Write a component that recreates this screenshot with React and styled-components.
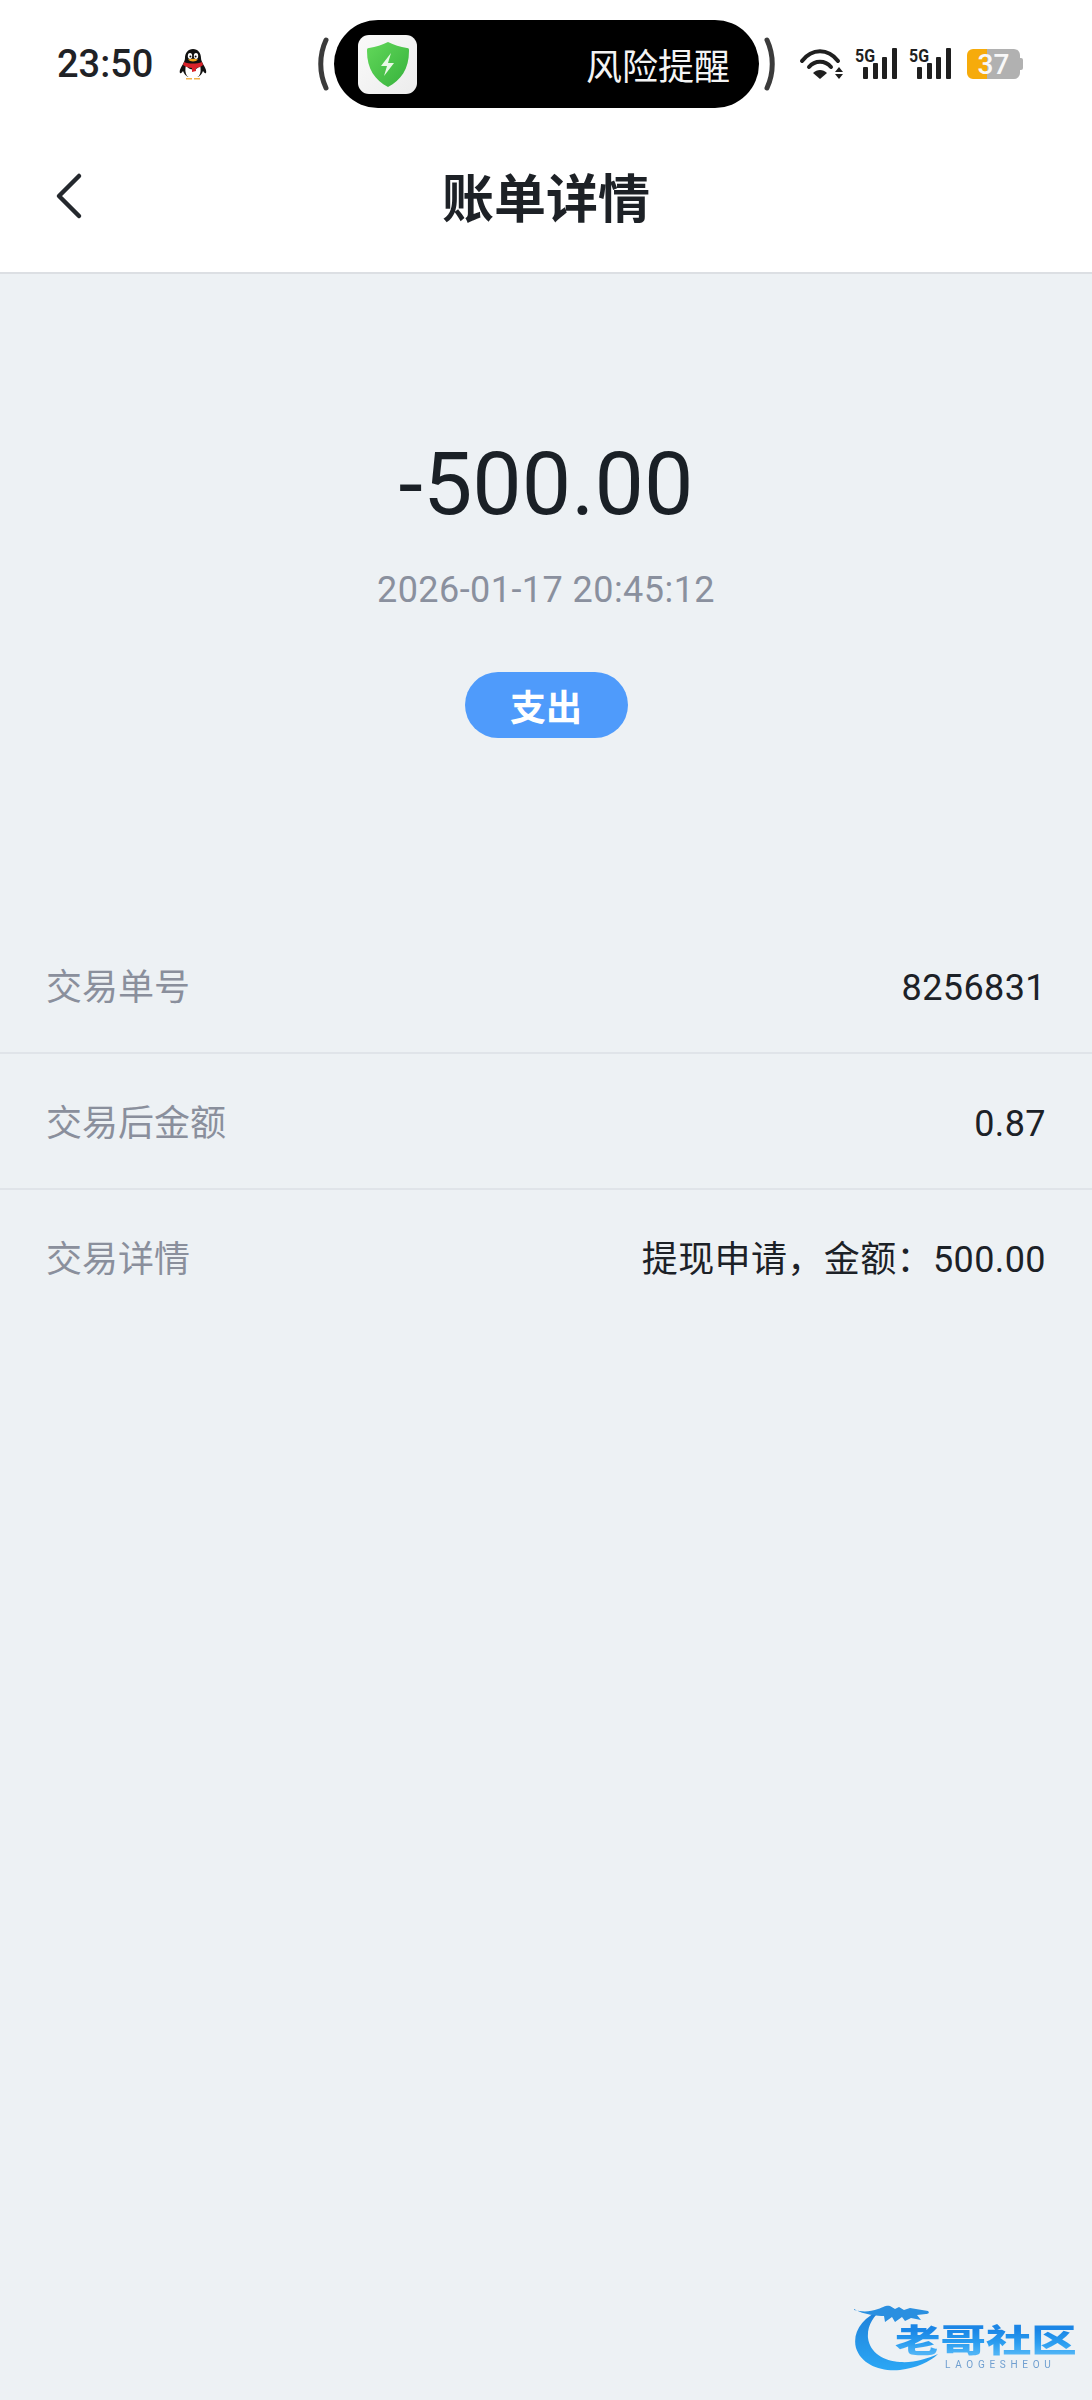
import React from 'react';
import styled, { createGlobalStyle } from 'styled-components';

const GlobalStyle = createGlobalStyle`
    html, body {
        margin: 0;
        padding: 0;
        background: #edf1f4;
        font-family: Roboto, "Noto Sans CJK SC", sans-serif;
    }
    * {
        box-sizing: border-box;
    }
`;

const Page = styled.div`
    position: relative;
    width: 1092px;
    height: 2400px;
    overflow: hidden;
    background: #edf1f4;
`;

const Header = styled.div`
    background: white;
    border-bottom: 2px solid #dcdfe3;
`;

const StatusBar = styled.div`
    display: flex;
    align-items: center;
    height: 124px;
    padding: 20px 0 16px 57px;
`;

const Time = styled.div`
    width: 97px;
    font-size: 38px;
    font-weight: 500;
    color: #1f2226;
`;

const QQ = styled.svg`
    width: 28px;
    height: 32px;
    margin-left: 25px;
`;

const Bracket = styled.svg`
    width: 12px;
    height: 54px;
    margin: ${(p) => p.$margin};
`;

const Island = styled.div`
    display: flex;
    align-items: center;
    justify-content: space-between;
    width: 425px;
    height: 88px;
    padding: 0 29px 0 24px;
    background: black;
    border-radius: 44px;
`;

const IslandIcon = styled.div`
    display: flex;
    align-items: center;
    justify-content: center;
    width: 59px;
    height: 59px;
    background: linear-gradient(135deg, #fafafa, #ececec);
    border-radius: 11px;
`;

const IslandText = styled.div`
    font-size: 36px;
    color: #f4f4f4;
`;

const StatusIcons = styled.div`
    display: flex;
    align-items: center;
    margin-left: 22px;
`;

const Wifi = styled.svg`
    width: 46px;
    height: 34px;
`;

const Signal = styled.svg`
    width: 44px;
    height: 42px;
    margin-left: ${(p) => p.$gap}px;
`;

const Battery = styled.div`
    position: relative;
    display: flex;
    align-items: center;
    justify-content: center;
    width: 53px;
    height: 30px;
    margin-left: 14px;
    font-size: 28px;
    font-weight: 500;
    color: #f8f8f8;
    background: linear-gradient(90deg, #f6ab0b 38%, #b1b1b1 38%);
    border-radius: 6px;

    &::after {
        content: "";
        position: absolute;
        right: -3px;
        top: 9px;
        width: 3px;
        height: 12px;
        background: #b1b1b1;
        border-radius: 0 2px 2px 0;
    }
`;

const NavBar = styled.div`
    display: grid;
    grid-template-columns: 1fr auto 1fr;
    align-items: center;
    height: 148px;
    padding-bottom: 4px;
`;

const Back = styled.svg`
    width: 32px;
    height: 48px;
    margin-left: 54px;
`;

const Title = styled.div`
    margin-top: 9px;
    font-size: 52px;
    line-height: 70px;
    font-weight: 700;
    color: #1d2126;
`;

const Hero = styled.div`
    display: flex;
    flex-direction: column;
    align-items: center;
    padding-top: 160px;
`;

const Amount = styled.div`
    font-size: 88px;
    line-height: 100px;
    color: #1a2026;
`;

const DateText = styled.div`
    margin-top: 34px;
    font-size: 36px;
    line-height: 44px;
    letter-spacing: 0.45px;
    color: #8a909e;
`;

const Badge = styled.div`
    display: flex;
    align-items: center;
    justify-content: center;
    width: 163px;
    height: 66px;
    margin-top: 60px;
    font-size: 36px;
    font-weight: 700;
    color: white;
    background: #4f9bfb;
    border-radius: 33px;
`;

const List = styled.div`
    margin-top: 180px;
`;

const Row = styled.div`
    display: flex;
    align-items: center;
    justify-content: space-between;
    height: 136px;
    padding: 5px 46px 0;
    font-size: 36px;
    line-height: 50px;
    border-bottom: 2px solid #e0e4e9;

    &:last-child {
        border-bottom-color: transparent;
    }
`;

const Label = styled.div`
    color: #8a8f9c;
`;

const Value = styled.div`
    letter-spacing: 0.4px;
    color: #1c2127;
`;

const Watermark = styled.div`
    position: absolute;
    left: 830px;
    top: 2280px;
    width: 262px;
    height: 120px;
    filter: blur(0.7px);
`;

const Dragon = styled.svg`
    position: absolute;
    left: 0;
    top: 0;
    width: 262px;
    height: 120px;
`;

const LogoText = styled.div`
    position: absolute;
    left: 65px;
    top: 43px;
    font-size: 32px;
    line-height: 36px;
    font-weight: 900;
    white-space: nowrap;
    color: transparent;
    background: linear-gradient(180deg, #1b86e6 20%, #2a9df0 55%, #4fb4f6 85%);
    -webkit-background-clip: text;
    background-clip: text;
    transform: scaleX(1.42);
    transform-origin: left center;
`;

const LogoSub = styled.div`
    position: absolute;
    left: 115px;
    top: 80px;
    font-size: 10px;
    line-height: 9px;
    letter-spacing: 4.7px;
    color: #6f9fd0;
`;

const rows = [
    ['交易单号', '8256831'],
    ['交易后金额', '0.87'],
    ['交易详情', '提现申请，金额：500.00'],
];

function SignalIcon({ gap }) {
    return (
        <Signal $gap={gap} viewBox="0 -4 44 42">
            <text x="0" y="15" fontFamily="Roboto" fontWeight="700" fontSize="19" textLength="20" lengthAdjust="spacingAndGlyphs" fill="#1f1f1f">5G</text>
            <rect x="8" y="20" width="5" height="12" rx="1" fill="#1f1f1f" />
            <rect x="18" y="16" width="5" height="16" rx="1" fill="#1f1f1f" />
            <rect x="27" y="10" width="5" height="22" rx="1" fill="#1f1f1f" />
            <rect x="37" y="1" width="5" height="31" rx="1" fill="#1f1f1f" />
        </Signal>
    );
}

export default function App() {
    return (
        <Page>
            <GlobalStyle />
            <Header>
                <StatusBar>
                    <Time>23:50</Time>
                    <QQ viewBox="0 0 28 32">
                        <path d="M14 1c-5 0-8 4-8 9 0 2-1 4-2 6-2 3-4 7-3 9 1 1 2-1 3-2 1 3 3 5 5 6h10c2-1 4-3 5-6 1 1 2 3 3 2 1-2-1-6-3-9-1-2-2-4-2-6 0-5-3-9-8-9z" fill="#111" />
                        <path d="M7 17c3 6 11 6 14 0 1 4 1 8-1 11-2 2-10 2-12 0-2-3-2-7-1-11z" fill="#fff" />
                        <path d="M5 14c5 2 13 2 18 0l1 3c-2 2-5 3-7 3v3l-4 1v-4c-3 0-6-1-9-3z" fill="#d8232a" />
                        <ellipse cx="11" cy="8" rx="2.2" ry="3" fill="#fff" />
                        <ellipse cx="17" cy="8" rx="2.2" ry="3" fill="#fff" />
                        <circle cx="11.4" cy="8.4" r="1" fill="#111" />
                        <circle cx="16.6" cy="8.4" r="1" fill="#111" />
                        <path d="M9 11.5c3-1 7-1 10 0-2 2.500-8 2.500-10 0z" fill="#f2a31b" />
                        <path d="M7 30h6v1.500H7zM15 30h6v1.500h-6z" fill="#f2b24a" />
                    </QQ>
                    <Bracket $margin="0 5px 0 110px" viewBox="0 0 12 54">
                        <path d="M9 3C2 18 2 36 9 51" fill="none" stroke="#3b3b3b" strokeWidth="5" strokeLinecap="round" />
                    </Bracket>
                    <Island>
                        <IslandIcon>
                            <svg width="42" height="46" viewBox="0 0 42 46">
                                <defs>
                                    <linearGradient id="shield" x1="0" y1="0" x2="1" y2="1">
                                        <stop offset="0" stopColor="#62d85a" />
                                        <stop offset="1" stopColor="#36b13c" />
                                    </linearGradient>
                                </defs>
                                <path d="M21 1c6 3 12 5 19 6 2 0 2 1 2 3 0 18-8 29-21 36C8 39 0 28 0 10c0-2 0-3 2-3 7-1 13-3 19-6z" fill="url(#shield)" />
                                <path d="M24 12l-10 13h6l-3 10 10-13h-6z" fill="#e9f8e6" />
                            </svg>
                        </IslandIcon>
                        <IslandText>风险提醒</IslandText>
                    </Island>
                    <Bracket $margin="0 0 0 5px" viewBox="0 0 12 54">
                        <path d="M3 3c7 15 7 33 0 48" fill="none" stroke="#3b3b3b" strokeWidth="5" strokeLinecap="round" />
                    </Bracket>
                    <StatusIcons>
                        <Wifi viewBox="0 0 46 34">
                            <g fill="none" stroke="#1f1f1f" strokeWidth="4" strokeLinecap="round">
                                <path d="M4 14C14 1 30 1 40 14" />
                                <path d="M11 20c6-7 16-7 22 0" />
                            </g>
                            <path d="M15 26c4-4 10-4 14 0l-7 6z" fill="#1f1f1f" />
                            <path d="M41 20l4 5h-8zM41 32l4-5h-8z" fill="#1f1f1f" />
                        </Wifi>
                        <SignalIcon gap={11} />
                        <SignalIcon gap={10} />
                        <Battery>37</Battery>
                    </StatusIcons>
                </StatusBar>
                <NavBar>
                    <Back viewBox="0 0 32 48">
                        <path d="M25 4L5 24l20 20" fill="none" stroke="#24282d" strokeWidth="4.500" strokeLinecap="round" strokeLinejoin="round" />
                    </Back>
                    <Title>账单详情</Title>
                </NavBar>
            </Header>
            <Hero>
                <Amount>-500.00</Amount>
                <DateText>2026-01-17 20:45:12</DateText>
                <Badge>支出</Badge>
            </Hero>
            <List>
                {rows.map(([label, value]) => (
                    <Row key={label}>
                        <Label>{label}</Label>
                        <Value>{value}</Value>
                    </Row>
                ))}
            </List>
            <Watermark>
                <Dragon viewBox="0 0 262 120">
                    <defs>
                        <linearGradient id="swirl" x1="0" y1="0" x2="0" y2="1">
                            <stop offset="0" stopColor="#1f7fd8" />
                            <stop offset="1" stopColor="#2ba7f5" />
                        </linearGradient>
                    </defs>
                    <path d="M52 29C32 38 22 52 26 68c5 16 24 24 44 22 16-2 30-8 38-16-12 5-24 9-38 8-16-1-30-9-32-24-1-12 5-21 14-29z" fill="url(#swirl)" />
                    <path d="M24 30c8 2 16 2 24-1 6-2 8-4 12-3l5 3 4-2 5 3 6-2 18 3c2 2 0 3-2 3l-9 1 4 5-10-2-6 3-3-4-7 5-3-5-7 5-1-6c-6 0-20-1-30-7z" fill="#2a8fe0" />
                </Dragon>
                <LogoText>老哥社区</LogoText>
                <LogoSub>LAOGESHEOU</LogoSub>
            </Watermark>
        </Page>
    );
}
